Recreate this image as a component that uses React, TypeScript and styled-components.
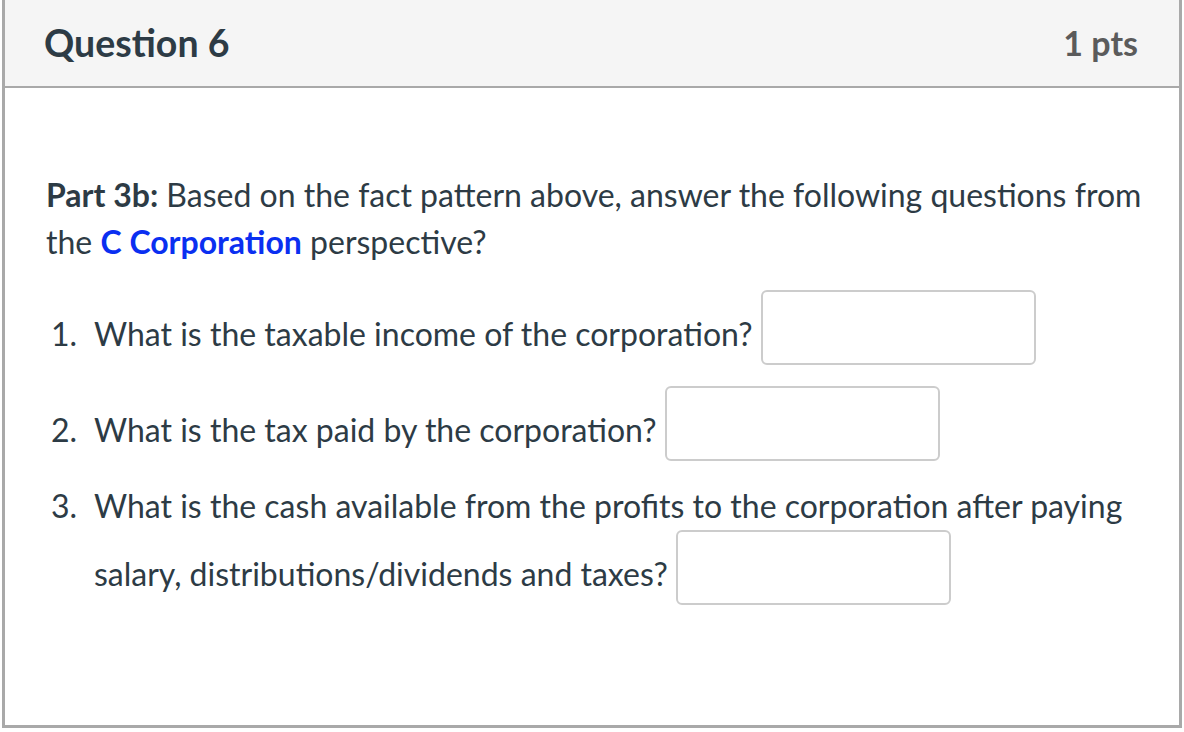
import styled, { createGlobalStyle } from 'styled-components'

const GlobalStyle = createGlobalStyle`
    html, body {
        margin: 0;
        padding: 0;
        background: #ffffff;
    }
    body {
        font-family: Lato, "Noto Sans", "Liberation Sans", sans-serif;
        color: #2d3b45;
    }
`

const Card = styled.div`
    box-sizing: border-box;
    width: 1180px;
    height: 728px;
    margin-left: 2px;
    border: 3px solid #a9a9a9;
    border-top: none;
    background: #ffffff;
`

const Header = styled.div`
    box-sizing: border-box;
    height: 88px;
    display: flex;
    align-items: center;
    justify-content: space-between;
    padding: 0 41px 2px 39px;
    background: #f5f5f5;
    border-bottom: 2px solid #a9a9a9;
`

const Title = styled.h2`
    margin: 0;
    font-size: 37.5px;
    font-weight: 700;
    color: #2d3b45;
`

const Points = styled.span`
    font-size: 34px;
    font-weight: 700;
    color: #5b5b5b;
`

const Body = styled.div`
    padding: 83px 30px 0 41px;
`

const Prompt = styled.p`
    margin: 0 0 25px;
    font-size: 32px;
    line-height: 47px;
`

const Highlight = styled.strong`
    font-weight: 700;
    color: #0a2ff1;
`

const List = styled.ol`
    margin: 0;
    padding: 0;
    list-style: none;
    font-size: 32px;
    line-height: 48px;
`

const Item = styled.li`
    display: flex;
    align-items: baseline;
`

const Number = styled.span`
    flex: 0 0 auto;
    box-sizing: border-box;
    width: 48px;
    padding-left: 5px;
`

const Question = styled.div`
    flex: 1 1 auto;
`

const Answer = styled.input`
    box-sizing: border-box;
    width: 275px;
    height: 75px;
    margin: 0 0 21px 0;
    vertical-align: middle;
    border: 2px solid #cccccc;
    border-radius: 6px;
    background: #ffffff;
    font: inherit;
    outline: none;
`

export default function App() {
    return (
        <>
            <GlobalStyle />
            <Card>
                <Header>
                    <Title>Question 6</Title>
                    <Points>1 pts</Points>
                </Header>
                <Body>
                    <Prompt>
                        <strong>Part 3b:</strong> Based on the fact pattern above, answer the following questions from the{' '}
                        <Highlight>C Corporation</Highlight> perspective?
                    </Prompt>
                    <List>
                        <Item>
                            <Number>1.</Number>
                            <Question>
                                What is the taxable income of the corporation? <Answer type="text" />
                            </Question>
                        </Item>
                        <Item>
                            <Number>2.</Number>
                            <Question>
                                What is the tax paid by the corporation? <Answer type="text" />
                            </Question>
                        </Item>
                        <Item>
                            <Number>3.</Number>
                            <Question>
                                What is the cash available from the profits to the corporation after paying
                                salary, distributions/dividends and taxes? <Answer type="text" />
                            </Question>
                        </Item>
                    </List>
                </Body>
            </Card>
        </>
    )
}
